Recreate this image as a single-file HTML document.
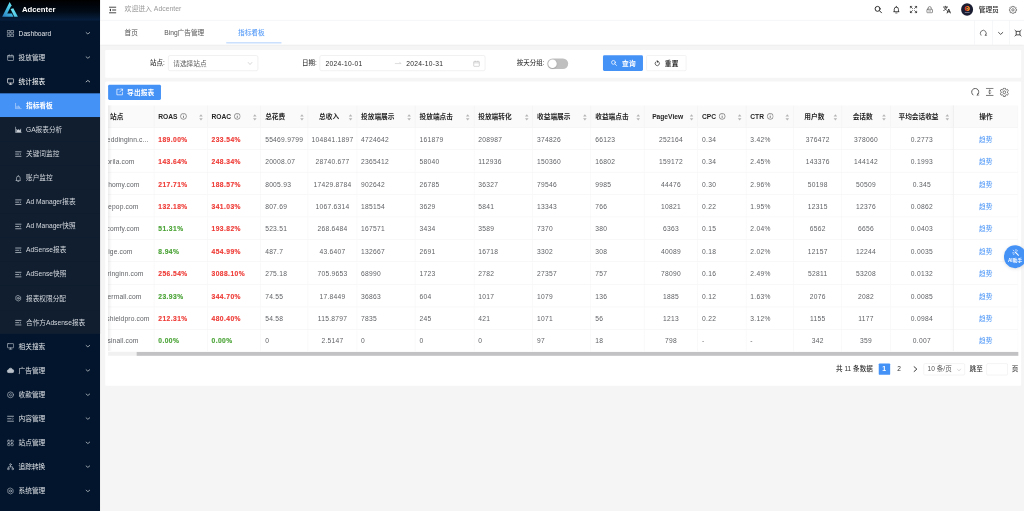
<!DOCTYPE html><html lang="zh-CN"><head><meta charset="utf-8"><title>Adcenter</title><style>
*{box-sizing:border-box;margin:0;padding:0}
html,body{width:1024px;height:511px;overflow:hidden;background:#f5f5f5}
body{font-family:"Liberation Sans","Noto Sans CJK SC",sans-serif;font-size:14px;color:#333;}
#app{position:absolute;left:0;top:0;width:2150px;height:1073px;transform:scale(0.476279);transform-origin:0 0;background:#f5f5f5;overflow:hidden;filter:opacity(.9999)}
.abs{position:absolute}
.side{position:absolute;left:0;top:0;width:210px;height:1073px;background:#03152c;box-shadow:1px 0 3px rgba(0,21,41,.28);z-index:5}
.logo{position:absolute;left:0;top:0;width:210px;height:43px;background:linear-gradient(180deg,#000 0%,#010a16 55%,#06203f 100%)}
.logo b{position:absolute;left:46px;top:0;line-height:41px;font-size:16.3px;color:#fff;font-weight:700}
.mi{position:absolute;left:0;width:210px;height:50.6px;line-height:50.6px;color:#dfe3e8;font-size:14px;white-space:nowrap}
.mi .t{position:absolute;left:39px;top:.8px}
.mi svg.ic{position:absolute;left:14px;top:18px;width:16.4px;height:16.4px;color:#b9c0c9}
.mi svg.ch{position:absolute;left:178.6px;top:20px;width:11px;height:11px}
.tsel{color:#fff}.tsel svg.ic{color:#fff}.sub{background:#101e30}
.sub .t{left:54.5px;color:#d5d9de}
.sub svg.ic{left:30.5px;top:19px;width:15px;height:15px;color:#ccd2d9}
.act{background:#4592f7}
.act .t{color:#fff;font-weight:700}.act svg.ic{color:#dbe9fd}
.hdr{position:absolute;left:210px;top:0;width:1940px;height:43px;background:#fff;border-bottom:1px solid #eef0f2}
.tabs{position:absolute;left:210px;top:43px;width:1940px;height:50.5px;background:#fff;box-shadow:0 1px 4px rgba(0,21,41,.08)}
.tab{position:absolute;top:-1px;line-height:53px;font-size:14px;color:#555;white-space:nowrap}
.card{position:absolute;background:#fff;border-radius:2px}
.lbl{position:absolute;line-height:32px;font-size:13.6px;color:#3a3a3a;font-weight:500;white-space:nowrap}
.inp{position:absolute;height:32.5px;border:1px solid #e2e2e4;border-radius:4px;background:#fff}
.btn{position:absolute;height:32.5px;border-radius:3px;line-height:32px;font-size:14px;white-space:nowrap}
.th{position:absolute;top:0;height:47px;line-height:47px;font-weight:700;color:#262626;font-size:14px;white-space:nowrap;border-bottom:1px solid #f0f0f0}
.th:after{content:"";position:absolute;right:0;top:0;height:47px;width:1px;background:#f0f0f0}
.td{position:absolute;height:47px;line-height:46px;color:#606266;font-size:14px;letter-spacing:.6px;white-space:nowrap;border-bottom:1px solid #f0f0f0;border-right:1px solid #f3f3f3;overflow:hidden}
.red{color:#ee3b36;font-weight:700;letter-spacing:.9px;-webkit-text-stroke:.3px #ee3b36}
.grn{color:#4aa336;font-weight:700;letter-spacing:.9px;-webkit-text-stroke:.3px #4aa336}
.lnk{color:#4a95f7;letter-spacing:0}
.pg{position:absolute;line-height:24px;font-size:13.8px;color:#333;font-weight:500;white-space:nowrap}
</style></head><body><div id="app">
<div class="side">
<div class="logo">
<svg class="abs" style="left:0;top:0;width:42px;height:42px" viewBox="0 0 42 42"><defs><linearGradient id="lg1" x1="0.1" y1="1" x2="0.7" y2="0"><stop offset="0" stop-color="#2a7fc2"/><stop offset="0.55" stop-color="#45bfe2"/><stop offset="1" stop-color="#66e6f4"/></linearGradient><linearGradient id="lg2" x1="0" y1="0" x2="1" y2="1"><stop offset="0" stop-color="#74e8f5"/><stop offset="1" stop-color="#49c4e6"/></linearGradient></defs><path d="M20.2 4L4.6 35.4H28.2L24.8 28.4H15.2L22.8 13.6L24.8 12.2z" fill="url(#lg1)"/><path d="M22.2 18.8L28 17.4L37.6 35.4H30.2z" fill="url(#lg2)"/></svg>
<b>Adcenter</b></div>
<div class="abs" style="left:0;top:195.8px;width:210px;height:505.5px;background:#101e30"></div>
<div class="mi" style="top:44.2px"><svg class="ic" viewBox="0 0 16.4 16.4" style="" fill="none" stroke="currentColor" stroke-width="1.35" stroke-linecap="round" stroke-linejoin="round"><rect x="2" y="2" width="5" height="5"/><rect x="9.5" y="2" width="5" height="5"/><rect x="2" y="9.5" width="5" height="5"/><rect x="9.5" y="9.5" width="5" height="5"/></svg><span class="t">Dashboard</span><svg class="ch" viewBox="0 0 12 12" style="" fill="none" stroke="currentColor" stroke-width="1.5" stroke-linecap="round" stroke-linejoin="round"><path d="M1.8 4.6L6 8l4.2-3.4"/></svg></div>
<div class="mi" style="top:94.8px"><svg class="ic" viewBox="0 0 16.4 16.4" style="" fill="none" stroke="currentColor" stroke-width="1.35" stroke-linecap="round" stroke-linejoin="round"><rect x="2" y="3.5" width="12.5" height="10.5" rx="1"/><path d="M2 6.5h12.5M5.5 2v2M11 2v2"/></svg><span class="t">投放管理</span><svg class="ch" viewBox="0 0 12 12" style="" fill="none" stroke="currentColor" stroke-width="1.5" stroke-linecap="round" stroke-linejoin="round"><path d="M1.8 4.6L6 8l4.2-3.4"/></svg></div>
<div class="mi tsel" style="top:145.3px"><svg class="ic" viewBox="0 0 16.4 16.4" style="" fill="none" stroke="currentColor" stroke-width="1.35" stroke-linecap="round" stroke-linejoin="round"><rect x="1.8" y="2.5" width="12.8" height="8.8" rx="1"/><path d="M5.5 14h5.4M8.2 11.5V14"/></svg><span class="t">统计报表</span><svg class="ch" viewBox="0 0 12 12" style="" fill="none" stroke="currentColor" stroke-width="1.5" stroke-linecap="round" stroke-linejoin="round"><path d="M1.8 7.6L6 4.2l4.2 3.4"/></svg></div>
<div class="mi sub act" style="top:195.8px"><svg class="ic" viewBox="0 0 16.4 16.4" style="" fill="none" stroke="currentColor" stroke-width="1.35" stroke-linecap="round" stroke-linejoin="round"><path d="M1.8 2v12.4h13" stroke-width="1.2"/><path d="M5 12.6V9M8 12.6V7.4M11 12.6V9.6" stroke-width="1.6" stroke-linecap="butt"/></svg><span class="t">指标看板</span></div>
<div class="mi sub" style="top:246.4px"><svg class="ic" viewBox="0 0 16.4 16.4" style="" fill="none" stroke="currentColor" stroke-width="1.35" stroke-linecap="round" stroke-linejoin="round"><path d="M1.8 2v12.4h13"/><path d="M4 13V6.4l2.6 2.8 2.4-2 2.4 2.4L14 5.6V13z" fill="currentColor" stroke-width=".6"/></svg><span class="t">GA报表分析</span></div>
<div class="mi sub" style="top:296.9px"><svg class="ic" viewBox="0 0 16.4 16.4" style="" fill="none" stroke="currentColor" stroke-width="1.35" stroke-linecap="round" stroke-linejoin="round"><path d="M2 3h12.4M2 8.2h7.4M2 13.4h12.4" stroke-width="1.7"/><path d="M12.4 6.8l1.8 1.4-1.8 1.4" stroke-width="1.1"/></svg><span class="t">关键词监控</span></div>
<div class="mi sub" style="top:347.5px"><svg class="ic" viewBox="0 0 16.4 16.4" style="" fill="none" stroke="currentColor" stroke-width="1.35" stroke-linecap="round" stroke-linejoin="round"><path d="M4 12.4V7.4a4.2 4.2 0 0 1 8.4 0v5l.8.6H3.2zM7 15.4h2.4M8.2 1.6v1.4"/></svg><span class="t">账户监控</span></div>
<div class="mi sub" style="top:398.0px"><svg class="ic" viewBox="0 0 16.4 16.4" style="" fill="none" stroke="currentColor" stroke-width="1.35" stroke-linecap="round" stroke-linejoin="round"><path d="M2 3h12.4M2 8.2h7.4M2 13.4h12.4" stroke-width="1.7"/><path d="M12.4 6.8l1.8 1.4-1.8 1.4" stroke-width="1.1"/></svg><span class="t">Ad Manager报表</span></div>
<div class="mi sub" style="top:448.6px"><svg class="ic" viewBox="0 0 16.4 16.4" style="" fill="none" stroke="currentColor" stroke-width="1.35" stroke-linecap="round" stroke-linejoin="round"><path d="M2 3h12.4M2 8.2h7.4M2 13.4h12.4" stroke-width="1.7"/><path d="M12.4 6.8l1.8 1.4-1.8 1.4" stroke-width="1.1"/></svg><span class="t">Ad Manager快照</span></div>
<div class="mi sub" style="top:499.1px"><svg class="ic" viewBox="0 0 16.4 16.4" style="" fill="none" stroke="currentColor" stroke-width="1.35" stroke-linecap="round" stroke-linejoin="round"><path d="M2 3h12.4M2 8.2h7.4M2 13.4h12.4" stroke-width="1.7"/><path d="M12.4 6.8l1.8 1.4-1.8 1.4" stroke-width="1.1"/></svg><span class="t">AdSense报表</span></div>
<div class="mi sub" style="top:549.7px"><svg class="ic" viewBox="0 0 16.4 16.4" style="" fill="none" stroke="currentColor" stroke-width="1.35" stroke-linecap="round" stroke-linejoin="round"><path d="M2 3h12.4M2 8.2h7.4M2 13.4h12.4" stroke-width="1.7"/><path d="M12.4 6.8l1.8 1.4-1.8 1.4" stroke-width="1.1"/></svg><span class="t">AdSense快照</span></div>
<div class="mi sub" style="top:600.2px"><svg class="ic" viewBox="0 0 16.4 16.4" style="" fill="none" stroke="currentColor" stroke-width="1.35" stroke-linecap="round" stroke-linejoin="round"><path d="M8 1.6l5.5 3.2v6.4L8 14.4l-5.5-3.2V4.8z"/><circle cx="8" cy="8" r="2.2"/></svg><span class="t">报表权限分配</span></div>
<div class="mi sub" style="top:650.8px"><svg class="ic" viewBox="0 0 16.4 16.4" style="" fill="none" stroke="currentColor" stroke-width="1.35" stroke-linecap="round" stroke-linejoin="round"><path d="M2 3h12.4M2 8.2h7.4M2 13.4h12.4" stroke-width="1.7"/><path d="M12.4 6.8l1.8 1.4-1.8 1.4" stroke-width="1.1"/></svg><span class="t">合作方Adsense报表</span></div>
<div class="mi" style="top:701.4px"><svg class="ic" viewBox="0 0 16.4 16.4" style="" fill="none" stroke="currentColor" stroke-width="1.35" stroke-linecap="round" stroke-linejoin="round"><rect x="1.8" y="2.5" width="12.8" height="8.8" rx="1"/><path d="M5.5 14h5.4M8.2 11.5V14"/></svg><span class="t">相关搜索</span><svg class="ch" viewBox="0 0 12 12" style="" fill="none" stroke="currentColor" stroke-width="1.5" stroke-linecap="round" stroke-linejoin="round"><path d="M1.8 4.6L6 8l4.2-3.4"/></svg></div>
<div class="mi" style="top:751.9px"><svg class="ic" viewBox="0 0 16.4 16.4" style="" fill="none" stroke="currentColor" stroke-width="1.35" stroke-linecap="round" stroke-linejoin="round"><path d="M4.2 12.5a3 3 0 0 1-.3-6 4.3 4.3 0 0 1 8.3-.6 3.3 3.3 0 0 1-.4 6.6z" fill="currentColor"/></svg><span class="t">广告管理</span><svg class="ch" viewBox="0 0 12 12" style="" fill="none" stroke="currentColor" stroke-width="1.5" stroke-linecap="round" stroke-linejoin="round"><path d="M1.8 4.6L6 8l4.2-3.4"/></svg></div>
<div class="mi" style="top:802.5px"><svg class="ic" viewBox="0 0 16.4 16.4" style="" fill="none" stroke="currentColor" stroke-width="1.35" stroke-linecap="round" stroke-linejoin="round"><circle cx="8" cy="8" r="6.2"/><path d="M10 6.3a2.4 2.4 0 1 0 0 3.4"/></svg><span class="t">收款管理</span><svg class="ch" viewBox="0 0 12 12" style="" fill="none" stroke="currentColor" stroke-width="1.5" stroke-linecap="round" stroke-linejoin="round"><path d="M1.8 4.6L6 8l4.2-3.4"/></svg></div>
<div class="mi" style="top:853.0px"><svg class="ic" viewBox="0 0 16.4 16.4" style="" fill="none" stroke="currentColor" stroke-width="1.35" stroke-linecap="round" stroke-linejoin="round"><path d="M2 3h12.4M2 8.2h7.4M2 13.4h12.4" stroke-width="1.7"/><path d="M12.4 6.8l1.8 1.4-1.8 1.4" stroke-width="1.1"/></svg><span class="t">内容管理</span><svg class="ch" viewBox="0 0 12 12" style="" fill="none" stroke="currentColor" stroke-width="1.5" stroke-linecap="round" stroke-linejoin="round"><path d="M1.8 4.6L6 8l4.2-3.4"/></svg></div>
<div class="mi" style="top:903.5px"><svg class="ic" viewBox="0 0 16.4 16.4" style="" fill="none" stroke="currentColor" stroke-width="1.35" stroke-linecap="round" stroke-linejoin="round"><rect x="2.2" y="2.2" width="4.6" height="4.6" rx="1"/><rect x="9.2" y="2.2" width="4.6" height="4.6" rx="1"/><rect x="2.2" y="9.2" width="4.6" height="4.6" rx="1"/><rect x="9.2" y="9.2" width="4.6" height="4.6" rx="1"/></svg><span class="t">站点管理</span><svg class="ch" viewBox="0 0 12 12" style="" fill="none" stroke="currentColor" stroke-width="1.5" stroke-linecap="round" stroke-linejoin="round"><path d="M1.8 4.6L6 8l4.2-3.4"/></svg></div>
<div class="mi" style="top:954.1px"><svg class="ic" viewBox="0 0 16.4 16.4" style="" fill="none" stroke="currentColor" stroke-width="1.35" stroke-linecap="round" stroke-linejoin="round"><circle cx="8" cy="3.3" r="1.8"/><circle cx="3.4" cy="12.6" r="1.8"/><circle cx="12.6" cy="12.6" r="1.8"/><path d="M8 5.2v3M3.4 10.8V8.2h9.2v2.6"/></svg><span class="t">追踪转换</span><svg class="ch" viewBox="0 0 12 12" style="" fill="none" stroke="currentColor" stroke-width="1.5" stroke-linecap="round" stroke-linejoin="round"><path d="M1.8 4.6L6 8l4.2-3.4"/></svg></div>
<div class="mi" style="top:1004.6px"><svg class="ic" viewBox="0 0 16.4 16.4" style="" fill="none" stroke="currentColor" stroke-width="1.35" stroke-linecap="round" stroke-linejoin="round"><path d="M8 1.6l5.5 3.2v6.4L8 14.4l-5.5-3.2V4.8z"/><circle cx="8" cy="8" r="2.2"/></svg><span class="t">系统管理</span><svg class="ch" viewBox="0 0 12 12" style="" fill="none" stroke="currentColor" stroke-width="1.5" stroke-linecap="round" stroke-linejoin="round"><path d="M1.8 4.6L6 8l4.2-3.4"/></svg></div>
<div class="mi" style="top:1055.2px"><svg class="ic" viewBox="0 0 16.4 16.4" style="" fill="none" stroke="currentColor" stroke-width="1.35" stroke-linecap="round" stroke-linejoin="round"><path d="M2 3h12.4M2 8.2h7.4M2 13.4h12.4" stroke-width="1.7"/><path d="M12.4 6.8l1.8 1.4-1.8 1.4" stroke-width="1.1"/></svg><span class="t">日志管理</span><svg class="ch" viewBox="0 0 12 12" style="" fill="none" stroke="currentColor" stroke-width="1.5" stroke-linecap="round" stroke-linejoin="round"><path d="M1.8 4.6L6 8l4.2-3.4"/></svg></div>
</div>
<div class="hdr">
<svg class="abs" style="left:18px;top:12.5px;width:17px;height:16px;color:#222" viewBox="0 0 17 16" fill="none" stroke="currentColor" stroke-width="1.9"><path d="M1 2h15M7.5 8h8.5M1 14h15"/><path d="M5 5L1.6 8 5 11z" fill="currentColor" stroke="none"/></svg>
<span class="abs" style="left:51.5px;top:-1px;line-height:40px;font-size:14.4px;color:#9a9a9a;white-space:nowrap">欢迎进入 Adcenter</span>
<svg class="abs" style="left:1625.3px;top:11px;width:18px;height:18px;color:#262626" viewBox="0 0 18 18" fill="none" stroke="currentColor" stroke-width="2.0" stroke-linecap="round" stroke-linejoin="round"><circle cx="7.6" cy="7.6" r="5.2"/><path d="M11.6 11.6L16 16"/></svg>
<svg class="abs" style="left:1662.9px;top:11px;width:18px;height:18px;color:#262626" viewBox="0 0 18 18" fill="none" stroke="currentColor" stroke-width="1.7" stroke-linecap="round" stroke-linejoin="round"><path d="M4.6 13.4V8.4a4.4 4.4 0 0 1 8.8 0v5M3.6 13.6h10.8M7.6 16.4h2.8M9 2.2v1.6"/></svg>
<svg class="abs" style="left:1699.2px;top:11px;width:18px;height:18px;color:#262626" viewBox="0 0 18 18" fill="none" stroke="currentColor" stroke-width="1.5" stroke-linecap="round" stroke-linejoin="round"><path d="M2.4 2.4l4.4 4.4M2.4 5.4v-3h3M15.6 2.4l-4.4 4.4M12.6 2.4h3v3M2.4 15.6l4.4-4.4M2.4 12.6v3h3M15.6 15.6l-4.4-4.4M15.6 12.6v3h-3"/></svg>
<svg class="abs" style="left:1733.4px;top:11px;width:18px;height:18px;color:#666" viewBox="0 0 18 18" fill="none" stroke="currentColor" stroke-width="1.5" stroke-linecap="round" stroke-linejoin="round"><rect x="3.2" y="8.4" width="11.6" height="7.4" rx="1.2"/><path d="M5.8 8.2V6a3.2 3.2 0 0 1 6.4 0v2.2M7 12h4"/></svg>
<svg class="abs" style="left:1768.5px;top:11px;width:18px;height:18px;color:#262626" viewBox="0 0 18 18" fill="none" stroke="currentColor" stroke-width="1.6" stroke-linecap="round" stroke-linejoin="round"><path d="M1.8 3.8h8.6M6 2v1.8M9 4c-.9 3.4-3.2 5.8-6.6 7M4 6.2c.9 2 2.8 3.6 5.2 4.4"/><path d="M9.6 16.4L13 8l3.4 8.4M10.8 13.8h4.4" stroke-width="1.9"/></svg>
<div class="abs" style="left:1807.6px;top:7px;width:25.5px;height:25.5px;border-radius:50%;background:#1b1d33;overflow:hidden"><svg viewBox="0 0 25 25" width="25.5" height="25.5"><circle cx="12.5" cy="10.6" r="4" fill="none" stroke="#e23a2a" stroke-width="2.3"/><path d="M12.5 6.6a4 4 0 0 1 0 8" fill="none" stroke="#f29a26" stroke-width="2.3"/><path d="M11 8.6l4 2-4 2z" fill="#f6c12e"/><rect x="7.5" y="18.2" width="10" height="1.5" fill="#8d8fa6"/></svg></div>
<span class="abs" style="left:1845.0px;top:0;line-height:40px;font-size:14px;color:#222;font-weight:500;white-space:nowrap">管理员</span>
<svg class="abs" style="left:1908.3px;top:11.5px;width:17.5px;height:17.5px;color:#505050" viewBox="0 0 19 19" fill="none" stroke="currentColor" stroke-width="1.6" stroke-linejoin="round"><path d="M7.61 3.18L7.82 1.07L11.18 1.07L11.39 3.18L12.63 3.69L14.28 2.35L16.65 4.72L15.31 6.37L15.82 7.61L17.93 7.82L17.93 11.18L15.82 11.39L15.31 12.63L16.65 14.28L14.28 16.65L12.63 15.31L11.39 15.82L11.18 17.93L7.82 17.93L7.61 15.82L6.37 15.31L4.72 16.65L2.35 14.28L3.69 12.63L3.18 11.39L1.07 11.18L1.07 7.82L3.18 7.61L3.69 6.37L2.35 4.72L4.72 2.35L6.37 3.69z"/><circle cx="9.5" cy="9.5" r="2.7"/></svg>
</div>
<div class="tabs">
<span class="tab" style="left:51.4px">首页</span>
<span class="tab" style="left:134.9px">Bing广告管理</span>
<span class="tab" style="left:289.7px;color:#4592f7">指标看板</span>
<div class="abs" style="left:265.0px;top:45.5px;width:115.5px;height:2px;background:#a9ccfb"></div>
<div class="abs" style="left:1835.9px;top:0;width:1px;height:50.5px;background:#eceef0"></div>
<div class="abs" style="left:1872.6px;top:0;width:1px;height:50.5px;background:#eceef0"></div>
<div class="abs" style="left:1909.3px;top:0;width:1px;height:50.5px;background:#eceef0"></div>
<svg class="abs" style="left:1846.0px;top:17.5px;width:17px;height:17px;color:#555" viewBox="0 0 17 17" fill="none" stroke="currentColor" stroke-width="1.7" stroke-linecap="round"><path d="M3.6 13A6.3 6.3 0 1 1 13 13.4"/><path d="M13.8 10.4l-.6 3.2 2.8-.4" stroke-width="1.3"/></svg>
<svg class="abs" style="left:1883.9px;top:19.5px;width:14px;height:14px;color:#444" viewBox="0 0 14 14" fill="none" stroke="currentColor" stroke-width="1.9" stroke-linecap="round" stroke-linejoin="round"><path d="M2.6 5.2L7 9.2l4.4-4"/></svg>
<svg class="abs" style="left:1919.3px;top:17.5px;width:17px;height:17px;color:#4a4a4a" viewBox="0 0 17 17" fill="none" stroke="currentColor" stroke-width="2" stroke-linecap="round"><rect x="4.6" y="4.8" width="7.8" height="7.4"/><path d="M2 2.4l2.2 2M15 2.4l-2.2 2M2 14.6l2.2-2M15 14.6l-2.2-2" stroke-width="1.8"/></svg>
</div>
<div class="card" style="left:221.3px;top:105.0px;width:1922.4px;height:58.1px">
<span class="lbl" style="left:93.6px;top:12.4px">站点:</span>
<div class="inp" style="left:131.4px;top:11.1px;width:189.5px"><span class="abs" style="left:10px;top:1.3px;line-height:30px;color:#5c5c5c;font-size:14px;white-space:nowrap">请选择站点</span><svg class="abs" style="right:10px;top:10px;width:12px;height:12px;color:#c0c0c0" viewBox="0 0 12 12" fill="none" stroke="currentColor" stroke-width="1.3"><path d="M1.5 3.5L6 8.5l4.5-5"/></svg></div>
<span class="lbl" style="left:412.8px;top:12.4px">日期:</span>
<div class="inp" style="left:449.5px;top:11.1px;width:348.5px">
<span class="abs" style="left:11.6px;top:1.3px;line-height:30px;color:#2c2c2c;font-size:14px;letter-spacing:.6px;white-space:nowrap">2024-10-01</span>
<svg class="abs" style="left:155.8px;top:10px;width:16px;height:12px;color:#c4c4c4" viewBox="0 0 16 12" fill="none" stroke="currentColor" stroke-width="1.2"><path d="M1 6.5h13M10.5 3l3.5 3.5"/></svg>
<span class="abs" style="left:181.1px;top:1.3px;line-height:30px;color:#2c2c2c;font-size:14px;letter-spacing:.6px;white-space:nowrap">2024-10-31</span>
<svg class="abs" style="left:321.6px;top:8.5px;width:15px;height:15px;color:#bdbdbd" viewBox="0 0 14 14" fill="none" stroke="currentColor" stroke-width="1.2"><rect x="1.5" y="2.8" width="11" height="9.6" rx="1"/><path d="M1.5 5.6h11M4.5 1.4v2.4M9.5 1.4v2.4"/></svg>
</div>
<span class="lbl" style="left:863.7px;top:12.4px">按天分组:</span>
<div class="abs" style="left:928.2px;top:17.8px;width:43.5px;height:22px;border-radius:11px;background:#bfbfbf"><div class="abs" style="left:2px;top:2px;width:18px;height:18px;border-radius:50%;background:#fff;box-shadow:0 1px 3px rgba(0,0,0,.25)"></div></div>
<div class="btn" style="left:1044.8px;top:11.1px;width:84.0px;background:#4592f7;color:#fff"><svg class="abs" style="left:16px;top:9px;width:14px;height:14px" viewBox="0 0 14 14" fill="none" stroke="#fff" stroke-width="1.5" stroke-linecap="round"><circle cx="6" cy="6" r="4"/><path d="M9.2 9.2L12.6 12.6"/></svg><span class="abs" style="left:39.9px;top:1px;font-weight:700;letter-spacing:.5px">查询</span></div>
<div class="btn" style="left:1136.1px;top:11.1px;width:83.5px;background:#fff;border:1px solid #e6e6e8;color:#222"><svg class="abs" style="left:15px;top:8.5px;width:14px;height:14px" viewBox="0 0 14 14" fill="none" stroke="#333" stroke-width="1.5" stroke-linecap="round"><path d="M9.6 3.4A4.6 4.6 0 1 1 4.4 3.4"/><path d="M6.2 1l3.2 2.2-2.6 2" stroke-width="1.2" fill="#333"/></svg><span class="abs" style="left:37.4px;top:0;font-weight:700;letter-spacing:.5px">重置</span></div>
</div>
<div class="card" style="left:221.3px;top:170.9px;width:1922.4px;height:638.9px">
<div class="btn" style="left:5.9px;top:6.7px;width:110.4px;background:#4592f7;color:#fff"><svg class="abs" style="left:16px;top:7.5px;width:16.5px;height:16.5px" viewBox="0 0 15 15" fill="none" stroke="#fff" stroke-width="1.3" stroke-linecap="round" stroke-linejoin="round"><path d="M12.8 8.4v4.4H2.2V2.2h4.4"/><path d="M7.4 7.6L13 2M9.4 1.8H13v3.6"/></svg><span class="abs" style="left:39.5px;top:0;font-weight:700;letter-spacing:.4px">导出报表</span></div>
<svg class="abs" style="left:1817.2px;top:13.2px;width:19px;height:19px;color:#505050" viewBox="0 0 19 19" fill="none" stroke="currentColor" stroke-width="1.9" stroke-linecap="round"><path d="M5 15.4A7.6 7.6 0 1 1 13.6 15.8"/><path d="M15 12.2l-1.2 3.8 3.6-.4" stroke-width="1.2"/></svg>
<svg class="abs" style="left:1847.9px;top:13.5px;width:18px;height:18px;color:#444" viewBox="0 0 18 18" fill="none" stroke="currentColor" stroke-width="1.7" stroke-linecap="round"><path d="M2 1.6h14M2 16.4h14" stroke-width="1.5"/><path d="M9 5v8M7.2 6.8L9 5l1.8 1.8M7.2 11.2L9 13l1.8-1.8" stroke-width="1.4"/></svg>
<svg class="abs" style="left:1877.5px;top:13.2px;width:19.5px;height:19.5px;color:#555" viewBox="0 0 19 19" fill="none" stroke="currentColor" stroke-width="1.6" stroke-linejoin="round"><path d="M7.30 3.38L7.58 0.91L11.42 0.91L11.70 3.38L13.70 4.54L15.98 3.54L17.90 6.87L15.90 8.35L15.90 10.65L17.90 12.13L15.98 15.46L13.70 14.46L11.70 15.62L11.42 18.09L7.58 18.09L7.30 15.62L5.30 14.46L3.02 15.46L1.10 12.13L3.10 10.65L3.10 8.35L1.10 6.87L3.02 3.54L5.30 4.54z"/><ellipse cx="9.5" cy="9.5" rx="2.6" ry="3"/></svg>
<div class="abs" style="left:5.7px;top:50.4px;width:1910.9px;height:517.0px;overflow:hidden">
<div class="abs" style="left:0;top:0;width:1910.9px;height:47px;background:#fafafa"></div>
<div class="th" style="left:-63.0px;width:159.9px"><span class="abs" style="left:67.0px;top:.5px">站点</span></div>
<div class="th" style="left:96.9px;width:111.8px"><span class="abs" style="left:8.5px;top:.5px">ROAS<svg style="display:inline-block;vertical-align:-2px;margin-left:5.5px;width:14.5px;height:14.5px" viewBox="0 0 14 14" fill="none" stroke="#444" stroke-width="1.1"><circle cx="7" cy="7" r="6"/><path d="M7 6.2v4M7 3.6v1.2" stroke-width="1.3"/></svg></span><svg class="abs" style="right:8.5px;top:17.5px;width:10px;height:15px" viewBox="0 0 9 14"><path d="M4.5 1L8 5.4H1z" fill="#b4b4b4"/><path d="M4.5 13L8 8.6H1z" fill="#b4b4b4"/></svg></div>
<div class="th" style="left:208.7px;width:112.5px"><span class="abs" style="left:8.5px;top:.5px">ROAC<svg style="display:inline-block;vertical-align:-2px;margin-left:5.5px;width:14.5px;height:14.5px" viewBox="0 0 14 14" fill="none" stroke="#444" stroke-width="1.1"><circle cx="7" cy="7" r="6"/><path d="M7 6.2v4M7 3.6v1.2" stroke-width="1.3"/></svg></span><svg class="abs" style="right:8.5px;top:17.5px;width:10px;height:15px" viewBox="0 0 9 14"><path d="M4.5 1L8 5.4H1z" fill="#b4b4b4"/><path d="M4.5 13L8 8.6H1z" fill="#b4b4b4"/></svg></div>
<div class="th" style="left:321.2px;width:99.3px"><span class="abs" style="left:8.5px;top:.5px">总花费</span><svg class="abs" style="right:8.5px;top:17.5px;width:10px;height:15px" viewBox="0 0 9 14"><path d="M4.5 1L8 5.4H1z" fill="#b4b4b4"/><path d="M4.5 13L8 8.6H1z" fill="#b4b4b4"/></svg></div>
<div class="th" style="left:420.5px;width:102.1px"><span class="abs" style="left:8px;top:.5px;width:71.1px;text-align:center">总收入</span><svg class="abs" style="right:8.5px;top:17.5px;width:10px;height:15px" viewBox="0 0 9 14"><path d="M4.5 1L8 5.4H1z" fill="#b4b4b4"/><path d="M4.5 13L8 8.6H1z" fill="#b4b4b4"/></svg></div>
<div class="th" style="left:522.6px;width:122.8px"><span class="abs" style="left:8.5px;top:.5px">投放端展示</span><svg class="abs" style="right:8.5px;top:17.5px;width:10px;height:15px" viewBox="0 0 9 14"><path d="M4.5 1L8 5.4H1z" fill="#b4b4b4"/><path d="M4.5 13L8 8.6H1z" fill="#b4b4b4"/></svg></div>
<div class="th" style="left:645.4px;width:123.3px"><span class="abs" style="left:8.5px;top:.5px">投放端点击</span><svg class="abs" style="right:8.5px;top:17.5px;width:10px;height:15px" viewBox="0 0 9 14"><path d="M4.5 1L8 5.4H1z" fill="#b4b4b4"/><path d="M4.5 13L8 8.6H1z" fill="#b4b4b4"/></svg></div>
<div class="th" style="left:768.7px;width:123.4px"><span class="abs" style="left:8.5px;top:.5px">投放端转化</span><svg class="abs" style="right:8.5px;top:17.5px;width:10px;height:15px" viewBox="0 0 9 14"><path d="M4.5 1L8 5.4H1z" fill="#b4b4b4"/><path d="M4.5 13L8 8.6H1z" fill="#b4b4b4"/></svg></div>
<div class="th" style="left:892.1px;width:122.3px"><span class="abs" style="left:8.5px;top:.5px">收益端展示</span><svg class="abs" style="right:8.5px;top:17.5px;width:10px;height:15px" viewBox="0 0 9 14"><path d="M4.5 1L8 5.4H1z" fill="#b4b4b4"/><path d="M4.5 13L8 8.6H1z" fill="#b4b4b4"/></svg></div>
<div class="th" style="left:1014.4px;width:111.8px"><span class="abs" style="left:8.5px;top:.5px">收益端点击</span><svg class="abs" style="right:8.5px;top:17.5px;width:10px;height:15px" viewBox="0 0 9 14"><path d="M4.5 1L8 5.4H1z" fill="#b4b4b4"/><path d="M4.5 13L8 8.6H1z" fill="#b4b4b4"/></svg></div>
<div class="th" style="left:1126.2px;width:112.3px"><span class="abs" style="left:8px;top:.5px;width:81.3px;text-align:center">PageView</span><svg class="abs" style="right:8.5px;top:17.5px;width:10px;height:15px" viewBox="0 0 9 14"><path d="M4.5 1L8 5.4H1z" fill="#b4b4b4"/><path d="M4.5 13L8 8.6H1z" fill="#b4b4b4"/></svg></div>
<div class="th" style="left:1238.5px;width:101.3px"><span class="abs" style="left:8.5px;top:.5px">CPC<svg style="display:inline-block;vertical-align:-2px;margin-left:5.5px;width:14.5px;height:14.5px" viewBox="0 0 14 14" fill="none" stroke="#444" stroke-width="1.1"><circle cx="7" cy="7" r="6"/><path d="M7 6.2v4M7 3.6v1.2" stroke-width="1.3"/></svg></span><svg class="abs" style="right:8.5px;top:17.5px;width:10px;height:15px" viewBox="0 0 9 14"><path d="M4.5 1L8 5.4H1z" fill="#b4b4b4"/><path d="M4.5 13L8 8.6H1z" fill="#b4b4b4"/></svg></div>
<div class="th" style="left:1339.8px;width:99.8px"><span class="abs" style="left:8.5px;top:.5px">CTR<svg style="display:inline-block;vertical-align:-2px;margin-left:5.5px;width:14.5px;height:14.5px" viewBox="0 0 14 14" fill="none" stroke="#444" stroke-width="1.1"><circle cx="7" cy="7" r="6"/><path d="M7 6.2v4M7 3.6v1.2" stroke-width="1.3"/></svg></span><svg class="abs" style="right:8.5px;top:17.5px;width:10px;height:15px" viewBox="0 0 9 14"><path d="M4.5 1L8 5.4H1z" fill="#b4b4b4"/><path d="M4.5 13L8 8.6H1z" fill="#b4b4b4"/></svg></div>
<div class="th" style="left:1439.6px;width:101.3px"><span class="abs" style="left:8px;top:.5px;width:70.3px;text-align:center">用户数</span><svg class="abs" style="right:8.5px;top:17.5px;width:10px;height:15px" viewBox="0 0 9 14"><path d="M4.5 1L8 5.4H1z" fill="#b4b4b4"/><path d="M4.5 13L8 8.6H1z" fill="#b4b4b4"/></svg></div>
<div class="th" style="left:1540.9px;width:101.8px"><span class="abs" style="left:8px;top:.5px;width:70.8px;text-align:center">会话数</span><svg class="abs" style="right:8.5px;top:17.5px;width:10px;height:15px" viewBox="0 0 9 14"><path d="M4.5 1L8 5.4H1z" fill="#b4b4b4"/><path d="M4.5 13L8 8.6H1z" fill="#b4b4b4"/></svg></div>
<div class="th" style="left:1642.7px;width:132.8px"><span class="abs" style="left:8px;top:.5px;width:101.8px;text-align:center">平均会话收益</span><svg class="abs" style="right:8.5px;top:17.5px;width:10px;height:15px" viewBox="0 0 9 14"><path d="M4.5 1L8 5.4H1z" fill="#b4b4b4"/><path d="M4.5 13L8 8.6H1z" fill="#b4b4b4"/></svg></div>
<div class="th" style="left:1775.5px;width:135.4px"><span class="abs" style="left:8px;top:.5px;width:119.4px;text-align:center">操作</span></div>
<div class="td" style="left:-63.0px;top:47.0px;width:159.9px"><span class="abs" style="right:11.0px;top:1.5px;letter-spacing:.3px">m.beddinginn.c...</span></div>
<div class="td" style="left:96.9px;top:47.0px;width:111.8px"><span class="abs red" style="left:8.5px;top:1.5px">189.00%</span></div>
<div class="td" style="left:208.7px;top:47.0px;width:112.5px"><span class="abs red" style="left:8.5px;top:1.5px">233.54%</span></div>
<div class="td" style="left:321.2px;top:47.0px;width:99.3px"><span class="abs " style="left:8.5px;top:1.5px">55469.9799</span></div>
<div class="td" style="left:420.5px;top:47.0px;width:102.1px"><span class="abs " style="left:0;top:1.5px;width:100%;text-align:center">104841.1897</span></div>
<div class="td" style="left:522.6px;top:47.0px;width:122.8px"><span class="abs " style="left:8.5px;top:1.5px">4724642</span></div>
<div class="td" style="left:645.4px;top:47.0px;width:123.3px"><span class="abs " style="left:8.5px;top:1.5px">161879</span></div>
<div class="td" style="left:768.7px;top:47.0px;width:123.4px"><span class="abs " style="left:8.5px;top:1.5px">208987</span></div>
<div class="td" style="left:892.1px;top:47.0px;width:122.3px"><span class="abs " style="left:8.5px;top:1.5px">374826</span></div>
<div class="td" style="left:1014.4px;top:47.0px;width:111.8px"><span class="abs " style="left:8.5px;top:1.5px">66123</span></div>
<div class="td" style="left:1126.2px;top:47.0px;width:112.3px"><span class="abs " style="left:0;top:1.5px;width:100%;text-align:center">252164</span></div>
<div class="td" style="left:1238.5px;top:47.0px;width:101.3px"><span class="abs " style="left:8.5px;top:1.5px">0.34</span></div>
<div class="td" style="left:1339.8px;top:47.0px;width:99.8px"><span class="abs " style="left:8.5px;top:1.5px">3.42%</span></div>
<div class="td" style="left:1439.6px;top:47.0px;width:101.3px"><span class="abs " style="left:0;top:1.5px;width:100%;text-align:center">376472</span></div>
<div class="td" style="left:1540.9px;top:47.0px;width:101.8px"><span class="abs " style="left:0;top:1.5px;width:100%;text-align:center">378060</span></div>
<div class="td" style="left:1642.7px;top:47.0px;width:132.8px"><span class="abs " style="left:0;top:1.5px;width:100%;text-align:center">0.2773</span></div>
<div class="td" style="left:1775.5px;top:47.0px;width:135.4px"><span class="abs lnk" style="left:0;top:1.5px;width:100%;text-align:center">趋势</span></div>
<div class="td" style="left:-63.0px;top:94.0px;width:159.9px"><span class="abs" style="right:40.4px;top:1.5px;letter-spacing:.3px">www.florila.com</span></div>
<div class="td" style="left:96.9px;top:94.0px;width:111.8px"><span class="abs red" style="left:8.5px;top:1.5px">143.64%</span></div>
<div class="td" style="left:208.7px;top:94.0px;width:112.5px"><span class="abs red" style="left:8.5px;top:1.5px">248.34%</span></div>
<div class="td" style="left:321.2px;top:94.0px;width:99.3px"><span class="abs " style="left:8.5px;top:1.5px">20008.07</span></div>
<div class="td" style="left:420.5px;top:94.0px;width:102.1px"><span class="abs " style="left:0;top:1.5px;width:100%;text-align:center">28740.677</span></div>
<div class="td" style="left:522.6px;top:94.0px;width:122.8px"><span class="abs " style="left:8.5px;top:1.5px">2365412</span></div>
<div class="td" style="left:645.4px;top:94.0px;width:123.3px"><span class="abs " style="left:8.5px;top:1.5px">58040</span></div>
<div class="td" style="left:768.7px;top:94.0px;width:123.4px"><span class="abs " style="left:8.5px;top:1.5px">112936</span></div>
<div class="td" style="left:892.1px;top:94.0px;width:122.3px"><span class="abs " style="left:8.5px;top:1.5px">150360</span></div>
<div class="td" style="left:1014.4px;top:94.0px;width:111.8px"><span class="abs " style="left:8.5px;top:1.5px">16802</span></div>
<div class="td" style="left:1126.2px;top:94.0px;width:112.3px"><span class="abs " style="left:0;top:1.5px;width:100%;text-align:center">159172</span></div>
<div class="td" style="left:1238.5px;top:94.0px;width:101.3px"><span class="abs " style="left:8.5px;top:1.5px">0.34</span></div>
<div class="td" style="left:1339.8px;top:94.0px;width:99.8px"><span class="abs " style="left:8.5px;top:1.5px">2.45%</span></div>
<div class="td" style="left:1439.6px;top:94.0px;width:101.3px"><span class="abs " style="left:0;top:1.5px;width:100%;text-align:center">143376</span></div>
<div class="td" style="left:1540.9px;top:94.0px;width:101.8px"><span class="abs " style="left:0;top:1.5px;width:100%;text-align:center">144142</span></div>
<div class="td" style="left:1642.7px;top:94.0px;width:132.8px"><span class="abs " style="left:0;top:1.5px;width:100%;text-align:center">0.1993</span></div>
<div class="td" style="left:1775.5px;top:94.0px;width:135.4px"><span class="abs lnk" style="left:0;top:1.5px;width:100%;text-align:center">趋势</span></div>
<div class="td" style="left:-63.0px;top:141.1px;width:159.9px"><span class="abs" style="right:29.9px;top:1.5px;letter-spacing:.3px">www.shomy.com</span></div>
<div class="td" style="left:96.9px;top:141.1px;width:111.8px"><span class="abs red" style="left:8.5px;top:1.5px">217.71%</span></div>
<div class="td" style="left:208.7px;top:141.1px;width:112.5px"><span class="abs red" style="left:8.5px;top:1.5px">188.57%</span></div>
<div class="td" style="left:321.2px;top:141.1px;width:99.3px"><span class="abs " style="left:8.5px;top:1.5px">8005.93</span></div>
<div class="td" style="left:420.5px;top:141.1px;width:102.1px"><span class="abs " style="left:0;top:1.5px;width:100%;text-align:center">17429.8784</span></div>
<div class="td" style="left:522.6px;top:141.1px;width:122.8px"><span class="abs " style="left:8.5px;top:1.5px">902642</span></div>
<div class="td" style="left:645.4px;top:141.1px;width:123.3px"><span class="abs " style="left:8.5px;top:1.5px">26785</span></div>
<div class="td" style="left:768.7px;top:141.1px;width:123.4px"><span class="abs " style="left:8.5px;top:1.5px">36327</span></div>
<div class="td" style="left:892.1px;top:141.1px;width:122.3px"><span class="abs " style="left:8.5px;top:1.5px">79546</span></div>
<div class="td" style="left:1014.4px;top:141.1px;width:111.8px"><span class="abs " style="left:8.5px;top:1.5px">9985</span></div>
<div class="td" style="left:1126.2px;top:141.1px;width:112.3px"><span class="abs " style="left:0;top:1.5px;width:100%;text-align:center">44476</span></div>
<div class="td" style="left:1238.5px;top:141.1px;width:101.3px"><span class="abs " style="left:8.5px;top:1.5px">0.30</span></div>
<div class="td" style="left:1339.8px;top:141.1px;width:99.8px"><span class="abs " style="left:8.5px;top:1.5px">2.96%</span></div>
<div class="td" style="left:1439.6px;top:141.1px;width:101.3px"><span class="abs " style="left:0;top:1.5px;width:100%;text-align:center">50198</span></div>
<div class="td" style="left:1540.9px;top:141.1px;width:101.8px"><span class="abs " style="left:0;top:1.5px;width:100%;text-align:center">50509</span></div>
<div class="td" style="left:1642.7px;top:141.1px;width:132.8px"><span class="abs " style="left:0;top:1.5px;width:100%;text-align:center">0.345</span></div>
<div class="td" style="left:1775.5px;top:141.1px;width:135.4px"><span class="abs lnk" style="left:0;top:1.5px;width:100%;text-align:center">趋势</span></div>
<div class="td" style="left:-63.0px;top:188.1px;width:159.9px"><span class="abs" style="right:32.0px;top:1.5px;letter-spacing:.3px">www.tepop.com</span></div>
<div class="td" style="left:96.9px;top:188.1px;width:111.8px"><span class="abs red" style="left:8.5px;top:1.5px">132.18%</span></div>
<div class="td" style="left:208.7px;top:188.1px;width:112.5px"><span class="abs red" style="left:8.5px;top:1.5px">341.03%</span></div>
<div class="td" style="left:321.2px;top:188.1px;width:99.3px"><span class="abs " style="left:8.5px;top:1.5px">807.69</span></div>
<div class="td" style="left:420.5px;top:188.1px;width:102.1px"><span class="abs " style="left:0;top:1.5px;width:100%;text-align:center">1067.6314</span></div>
<div class="td" style="left:522.6px;top:188.1px;width:122.8px"><span class="abs " style="left:8.5px;top:1.5px">185154</span></div>
<div class="td" style="left:645.4px;top:188.1px;width:123.3px"><span class="abs " style="left:8.5px;top:1.5px">3629</span></div>
<div class="td" style="left:768.7px;top:188.1px;width:123.4px"><span class="abs " style="left:8.5px;top:1.5px">5841</span></div>
<div class="td" style="left:892.1px;top:188.1px;width:122.3px"><span class="abs " style="left:8.5px;top:1.5px">13343</span></div>
<div class="td" style="left:1014.4px;top:188.1px;width:111.8px"><span class="abs " style="left:8.5px;top:1.5px">766</span></div>
<div class="td" style="left:1126.2px;top:188.1px;width:112.3px"><span class="abs " style="left:0;top:1.5px;width:100%;text-align:center">10821</span></div>
<div class="td" style="left:1238.5px;top:188.1px;width:101.3px"><span class="abs " style="left:8.5px;top:1.5px">0.22</span></div>
<div class="td" style="left:1339.8px;top:188.1px;width:99.8px"><span class="abs " style="left:8.5px;top:1.5px">1.95%</span></div>
<div class="td" style="left:1439.6px;top:188.1px;width:101.3px"><span class="abs " style="left:0;top:1.5px;width:100%;text-align:center">12315</span></div>
<div class="td" style="left:1540.9px;top:188.1px;width:101.8px"><span class="abs " style="left:0;top:1.5px;width:100%;text-align:center">12376</span></div>
<div class="td" style="left:1642.7px;top:188.1px;width:132.8px"><span class="abs " style="left:0;top:1.5px;width:100%;text-align:center">0.0862</span></div>
<div class="td" style="left:1775.5px;top:188.1px;width:135.4px"><span class="abs lnk" style="left:0;top:1.5px;width:100%;text-align:center">趋势</span></div>
<div class="td" style="left:-63.0px;top:235.2px;width:159.9px"><span class="abs" style="right:29.9px;top:1.5px;letter-spacing:.3px">www.comfy.com</span></div>
<div class="td" style="left:96.9px;top:235.2px;width:111.8px"><span class="abs grn" style="left:8.5px;top:1.5px">51.31%</span></div>
<div class="td" style="left:208.7px;top:235.2px;width:112.5px"><span class="abs red" style="left:8.5px;top:1.5px">193.82%</span></div>
<div class="td" style="left:321.2px;top:235.2px;width:99.3px"><span class="abs " style="left:8.5px;top:1.5px">523.51</span></div>
<div class="td" style="left:420.5px;top:235.2px;width:102.1px"><span class="abs " style="left:0;top:1.5px;width:100%;text-align:center">268.6484</span></div>
<div class="td" style="left:522.6px;top:235.2px;width:122.8px"><span class="abs " style="left:8.5px;top:1.5px">167571</span></div>
<div class="td" style="left:645.4px;top:235.2px;width:123.3px"><span class="abs " style="left:8.5px;top:1.5px">3434</span></div>
<div class="td" style="left:768.7px;top:235.2px;width:123.4px"><span class="abs " style="left:8.5px;top:1.5px">3589</span></div>
<div class="td" style="left:892.1px;top:235.2px;width:122.3px"><span class="abs " style="left:8.5px;top:1.5px">7370</span></div>
<div class="td" style="left:1014.4px;top:235.2px;width:111.8px"><span class="abs " style="left:8.5px;top:1.5px">380</span></div>
<div class="td" style="left:1126.2px;top:235.2px;width:112.3px"><span class="abs " style="left:0;top:1.5px;width:100%;text-align:center">6363</span></div>
<div class="td" style="left:1238.5px;top:235.2px;width:101.3px"><span class="abs " style="left:8.5px;top:1.5px">0.15</span></div>
<div class="td" style="left:1339.8px;top:235.2px;width:99.8px"><span class="abs " style="left:8.5px;top:1.5px">2.04%</span></div>
<div class="td" style="left:1439.6px;top:235.2px;width:101.3px"><span class="abs " style="left:0;top:1.5px;width:100%;text-align:center">6562</span></div>
<div class="td" style="left:1540.9px;top:235.2px;width:101.8px"><span class="abs " style="left:0;top:1.5px;width:100%;text-align:center">6656</span></div>
<div class="td" style="left:1642.7px;top:235.2px;width:132.8px"><span class="abs " style="left:0;top:1.5px;width:100%;text-align:center">0.0403</span></div>
<div class="td" style="left:1775.5px;top:235.2px;width:135.4px"><span class="abs lnk" style="left:0;top:1.5px;width:100%;text-align:center">趋势</span></div>
<div class="td" style="left:-63.0px;top:282.2px;width:159.9px"><span class="abs" style="right:44.6px;top:1.5px;letter-spacing:.3px">www.wige.com</span></div>
<div class="td" style="left:96.9px;top:282.2px;width:111.8px"><span class="abs grn" style="left:8.5px;top:1.5px">8.94%</span></div>
<div class="td" style="left:208.7px;top:282.2px;width:112.5px"><span class="abs red" style="left:8.5px;top:1.5px">454.99%</span></div>
<div class="td" style="left:321.2px;top:282.2px;width:99.3px"><span class="abs " style="left:8.5px;top:1.5px">487.7</span></div>
<div class="td" style="left:420.5px;top:282.2px;width:102.1px"><span class="abs " style="left:0;top:1.5px;width:100%;text-align:center">43.6407</span></div>
<div class="td" style="left:522.6px;top:282.2px;width:122.8px"><span class="abs " style="left:8.5px;top:1.5px">132667</span></div>
<div class="td" style="left:645.4px;top:282.2px;width:123.3px"><span class="abs " style="left:8.5px;top:1.5px">2691</span></div>
<div class="td" style="left:768.7px;top:282.2px;width:123.4px"><span class="abs " style="left:8.5px;top:1.5px">16718</span></div>
<div class="td" style="left:892.1px;top:282.2px;width:122.3px"><span class="abs " style="left:8.5px;top:1.5px">3302</span></div>
<div class="td" style="left:1014.4px;top:282.2px;width:111.8px"><span class="abs " style="left:8.5px;top:1.5px">308</span></div>
<div class="td" style="left:1126.2px;top:282.2px;width:112.3px"><span class="abs " style="left:0;top:1.5px;width:100%;text-align:center">40089</span></div>
<div class="td" style="left:1238.5px;top:282.2px;width:101.3px"><span class="abs " style="left:8.5px;top:1.5px">0.18</span></div>
<div class="td" style="left:1339.8px;top:282.2px;width:99.8px"><span class="abs " style="left:8.5px;top:1.5px">2.02%</span></div>
<div class="td" style="left:1439.6px;top:282.2px;width:101.3px"><span class="abs " style="left:0;top:1.5px;width:100%;text-align:center">12157</span></div>
<div class="td" style="left:1540.9px;top:282.2px;width:101.8px"><span class="abs " style="left:0;top:1.5px;width:100%;text-align:center">12244</span></div>
<div class="td" style="left:1642.7px;top:282.2px;width:132.8px"><span class="abs " style="left:0;top:1.5px;width:100%;text-align:center">0.0035</span></div>
<div class="td" style="left:1775.5px;top:282.2px;width:135.4px"><span class="abs lnk" style="left:0;top:1.5px;width:100%;text-align:center">趋势</span></div>
<div class="td" style="left:-63.0px;top:329.3px;width:159.9px"><span class="abs" style="right:21.5px;top:1.5px;letter-spacing:.3px">www.ringinn.com</span></div>
<div class="td" style="left:96.9px;top:329.3px;width:111.8px"><span class="abs red" style="left:8.5px;top:1.5px">256.54%</span></div>
<div class="td" style="left:208.7px;top:329.3px;width:112.5px"><span class="abs red" style="left:8.5px;top:1.5px">3088.10%</span></div>
<div class="td" style="left:321.2px;top:329.3px;width:99.3px"><span class="abs " style="left:8.5px;top:1.5px">275.18</span></div>
<div class="td" style="left:420.5px;top:329.3px;width:102.1px"><span class="abs " style="left:0;top:1.5px;width:100%;text-align:center">705.9653</span></div>
<div class="td" style="left:522.6px;top:329.3px;width:122.8px"><span class="abs " style="left:8.5px;top:1.5px">68990</span></div>
<div class="td" style="left:645.4px;top:329.3px;width:123.3px"><span class="abs " style="left:8.5px;top:1.5px">1723</span></div>
<div class="td" style="left:768.7px;top:329.3px;width:123.4px"><span class="abs " style="left:8.5px;top:1.5px">2782</span></div>
<div class="td" style="left:892.1px;top:329.3px;width:122.3px"><span class="abs " style="left:8.5px;top:1.5px">27357</span></div>
<div class="td" style="left:1014.4px;top:329.3px;width:111.8px"><span class="abs " style="left:8.5px;top:1.5px">757</span></div>
<div class="td" style="left:1126.2px;top:329.3px;width:112.3px"><span class="abs " style="left:0;top:1.5px;width:100%;text-align:center">78090</span></div>
<div class="td" style="left:1238.5px;top:329.3px;width:101.3px"><span class="abs " style="left:8.5px;top:1.5px">0.16</span></div>
<div class="td" style="left:1339.8px;top:329.3px;width:99.8px"><span class="abs " style="left:8.5px;top:1.5px">2.49%</span></div>
<div class="td" style="left:1439.6px;top:329.3px;width:101.3px"><span class="abs " style="left:0;top:1.5px;width:100%;text-align:center">52811</span></div>
<div class="td" style="left:1540.9px;top:329.3px;width:101.8px"><span class="abs " style="left:0;top:1.5px;width:100%;text-align:center">53208</span></div>
<div class="td" style="left:1642.7px;top:329.3px;width:132.8px"><span class="abs " style="left:0;top:1.5px;width:100%;text-align:center">0.0132</span></div>
<div class="td" style="left:1775.5px;top:329.3px;width:135.4px"><span class="abs lnk" style="left:0;top:1.5px;width:100%;text-align:center">趋势</span></div>
<div class="td" style="left:-63.0px;top:376.3px;width:159.9px"><span class="abs" style="right:25.7px;top:1.5px;letter-spacing:.3px">www.ermall.com</span></div>
<div class="td" style="left:96.9px;top:376.3px;width:111.8px"><span class="abs grn" style="left:8.5px;top:1.5px">23.93%</span></div>
<div class="td" style="left:208.7px;top:376.3px;width:112.5px"><span class="abs red" style="left:8.5px;top:1.5px">344.70%</span></div>
<div class="td" style="left:321.2px;top:376.3px;width:99.3px"><span class="abs " style="left:8.5px;top:1.5px">74.55</span></div>
<div class="td" style="left:420.5px;top:376.3px;width:102.1px"><span class="abs " style="left:0;top:1.5px;width:100%;text-align:center">17.8449</span></div>
<div class="td" style="left:522.6px;top:376.3px;width:122.8px"><span class="abs " style="left:8.5px;top:1.5px">36863</span></div>
<div class="td" style="left:645.4px;top:376.3px;width:123.3px"><span class="abs " style="left:8.5px;top:1.5px">604</span></div>
<div class="td" style="left:768.7px;top:376.3px;width:123.4px"><span class="abs " style="left:8.5px;top:1.5px">1017</span></div>
<div class="td" style="left:892.1px;top:376.3px;width:122.3px"><span class="abs " style="left:8.5px;top:1.5px">1079</span></div>
<div class="td" style="left:1014.4px;top:376.3px;width:111.8px"><span class="abs " style="left:8.5px;top:1.5px">136</span></div>
<div class="td" style="left:1126.2px;top:376.3px;width:112.3px"><span class="abs " style="left:0;top:1.5px;width:100%;text-align:center">1885</span></div>
<div class="td" style="left:1238.5px;top:376.3px;width:101.3px"><span class="abs " style="left:8.5px;top:1.5px">0.12</span></div>
<div class="td" style="left:1339.8px;top:376.3px;width:99.8px"><span class="abs " style="left:8.5px;top:1.5px">1.63%</span></div>
<div class="td" style="left:1439.6px;top:376.3px;width:101.3px"><span class="abs " style="left:0;top:1.5px;width:100%;text-align:center">2076</span></div>
<div class="td" style="left:1540.9px;top:376.3px;width:101.8px"><span class="abs " style="left:0;top:1.5px;width:100%;text-align:center">2082</span></div>
<div class="td" style="left:1642.7px;top:376.3px;width:132.8px"><span class="abs " style="left:0;top:1.5px;width:100%;text-align:center">0.0085</span></div>
<div class="td" style="left:1775.5px;top:376.3px;width:135.4px"><span class="abs lnk" style="left:0;top:1.5px;width:100%;text-align:center">趋势</span></div>
<div class="td" style="left:-63.0px;top:423.4px;width:159.9px"><span class="abs" style="right:8.9px;top:1.5px;letter-spacing:.3px">www.shieldpro.com</span></div>
<div class="td" style="left:96.9px;top:423.4px;width:111.8px"><span class="abs red" style="left:8.5px;top:1.5px">212.31%</span></div>
<div class="td" style="left:208.7px;top:423.4px;width:112.5px"><span class="abs red" style="left:8.5px;top:1.5px">480.40%</span></div>
<div class="td" style="left:321.2px;top:423.4px;width:99.3px"><span class="abs " style="left:8.5px;top:1.5px">54.58</span></div>
<div class="td" style="left:420.5px;top:423.4px;width:102.1px"><span class="abs " style="left:0;top:1.5px;width:100%;text-align:center">115.8797</span></div>
<div class="td" style="left:522.6px;top:423.4px;width:122.8px"><span class="abs " style="left:8.5px;top:1.5px">7835</span></div>
<div class="td" style="left:645.4px;top:423.4px;width:123.3px"><span class="abs " style="left:8.5px;top:1.5px">245</span></div>
<div class="td" style="left:768.7px;top:423.4px;width:123.4px"><span class="abs " style="left:8.5px;top:1.5px">421</span></div>
<div class="td" style="left:892.1px;top:423.4px;width:122.3px"><span class="abs " style="left:8.5px;top:1.5px">1071</span></div>
<div class="td" style="left:1014.4px;top:423.4px;width:111.8px"><span class="abs " style="left:8.5px;top:1.5px">56</span></div>
<div class="td" style="left:1126.2px;top:423.4px;width:112.3px"><span class="abs " style="left:0;top:1.5px;width:100%;text-align:center">1213</span></div>
<div class="td" style="left:1238.5px;top:423.4px;width:101.3px"><span class="abs " style="left:8.5px;top:1.5px">0.22</span></div>
<div class="td" style="left:1339.8px;top:423.4px;width:99.8px"><span class="abs " style="left:8.5px;top:1.5px">3.12%</span></div>
<div class="td" style="left:1439.6px;top:423.4px;width:101.3px"><span class="abs " style="left:0;top:1.5px;width:100%;text-align:center">1155</span></div>
<div class="td" style="left:1540.9px;top:423.4px;width:101.8px"><span class="abs " style="left:0;top:1.5px;width:100%;text-align:center">1177</span></div>
<div class="td" style="left:1642.7px;top:423.4px;width:132.8px"><span class="abs " style="left:0;top:1.5px;width:100%;text-align:center">0.0984</span></div>
<div class="td" style="left:1775.5px;top:423.4px;width:135.4px"><span class="abs lnk" style="left:0;top:1.5px;width:100%;text-align:center">趋势</span></div>
<div class="td" style="left:-63.0px;top:470.4px;width:159.9px"><span class="abs" style="right:32.0px;top:1.5px;letter-spacing:.3px">www.wigsinall.com</span></div>
<div class="td" style="left:96.9px;top:470.4px;width:111.8px"><span class="abs grn" style="left:8.5px;top:1.5px">0.00%</span></div>
<div class="td" style="left:208.7px;top:470.4px;width:112.5px"><span class="abs grn" style="left:8.5px;top:1.5px">0.00%</span></div>
<div class="td" style="left:321.2px;top:470.4px;width:99.3px"><span class="abs " style="left:8.5px;top:1.5px">0</span></div>
<div class="td" style="left:420.5px;top:470.4px;width:102.1px"><span class="abs " style="left:0;top:1.5px;width:100%;text-align:center">2.5147</span></div>
<div class="td" style="left:522.6px;top:470.4px;width:122.8px"><span class="abs " style="left:8.5px;top:1.5px">0</span></div>
<div class="td" style="left:645.4px;top:470.4px;width:123.3px"><span class="abs " style="left:8.5px;top:1.5px">0</span></div>
<div class="td" style="left:768.7px;top:470.4px;width:123.4px"><span class="abs " style="left:8.5px;top:1.5px">0</span></div>
<div class="td" style="left:892.1px;top:470.4px;width:122.3px"><span class="abs " style="left:8.5px;top:1.5px">97</span></div>
<div class="td" style="left:1014.4px;top:470.4px;width:111.8px"><span class="abs " style="left:8.5px;top:1.5px">18</span></div>
<div class="td" style="left:1126.2px;top:470.4px;width:112.3px"><span class="abs " style="left:0;top:1.5px;width:100%;text-align:center">798</span></div>
<div class="td" style="left:1238.5px;top:470.4px;width:101.3px"><span class="abs " style="left:8.5px;top:1.5px">-</span></div>
<div class="td" style="left:1339.8px;top:470.4px;width:99.8px"><span class="abs " style="left:8.5px;top:1.5px">-</span></div>
<div class="td" style="left:1439.6px;top:470.4px;width:101.3px"><span class="abs " style="left:0;top:1.5px;width:100%;text-align:center">342</span></div>
<div class="td" style="left:1540.9px;top:470.4px;width:101.8px"><span class="abs " style="left:0;top:1.5px;width:100%;text-align:center">359</span></div>
<div class="td" style="left:1642.7px;top:470.4px;width:132.8px"><span class="abs " style="left:0;top:1.5px;width:100%;text-align:center">0.007</span></div>
<div class="td" style="left:1775.5px;top:470.4px;width:135.4px"><span class="abs lnk" style="left:0;top:1.5px;width:100%;text-align:center">趋势</span></div>
<div class="abs" style="left:0;top:0;width:30px;height:517px;box-shadow:inset 10px 0 8px -8px rgba(0,0,0,.11)"></div>
<div class="abs" style="left:1745.5px;top:0;width:30px;height:517px;box-shadow:inset -10px 0 8px -8px rgba(0,0,0,.03)"></div>
</div>
<div class="abs" style="left:5.7px;top:568.0px;width:1910.9px;height:8.5px;background:#f1f1f1"></div>
<div class="abs" style="left:65.5px;top:568.0px;width:1851.1px;height:8.5px;background:#c2c2c5"></div>
<span class="pg" style="left:1534.0px;top:592.5px">共 11 条数据</span>
<div class="abs" style="left:1623.4px;top:592.5px;width:24px;height:24px;border-radius:2px;background:#4592f7;color:#fff;text-align:center;line-height:24px;font-size:14.5px;font-weight:700">1</div>
<span class="pg" style="left:1654.2px;top:592.5px;width:24px;text-align:center">2</span>
<svg class="abs" style="left:1693.5px;top:597.5px;width:14px;height:14px;color:#333" viewBox="0 0 12 12" fill="none" stroke="currentColor" stroke-width="1.7" stroke-linecap="round" stroke-linejoin="round"><path d="M3.6 1.6L8.6 6 3.6 10.4"/></svg>
<div class="abs" style="left:1717.3px;top:592.5px;width:87.8px;height:24.5px;border:1px solid #e8e8ea;border-radius:3px"><span class="abs" style="left:8px;top:0;line-height:22px;font-size:13.8px;color:#555;white-space:nowrap">10 条/页</span><svg class="abs" style="right:6px;top:6.5px;width:11px;height:11px;color:#c0c0c0" viewBox="0 0 12 12" fill="none" stroke="currentColor" stroke-width="1.3"><path d="M1.5 3.5L6 8.5l4.5-5"/></svg></div>
<span class="pg" style="left:1814.5px;top:592.5px">跳至</span>
<div class="abs" style="left:1849.8px;top:592.5px;width:44.5px;height:24.5px;border:1px solid #e8e8ea;border-radius:3px"></div>
<span class="pg" style="left:1903.1px;top:592.5px">页</span>
</div>
<div class="abs" style="left:2107.5px;top:515.2px;width:47.5px;height:47.5px;border-radius:50%;background:#4592f7;z-index:9;box-shadow:0 2px 8px rgba(0,0,0,.12)">
<svg class="abs" style="left:15px;top:6px;width:18px;height:18px" viewBox="0 0 18 18" fill="none" stroke="#fff" stroke-width="1.7" stroke-linecap="round"><path d="M8.6 8.2L15.4 15" stroke-width="2.3"/><path d="M4.4 4.2l1.8 1.8M10.2 2.8v2.2M3.2 10h2.2M13.4 5.4l-1.6 1.4M6.4 12.2l-1.2 1.4" stroke-width="1.5"/></svg>
<span class="abs" style="left:0;top:25px;width:47.5px;text-align:center;line-height:14px;font-size:10px;color:#fff;font-weight:700;white-space:nowrap">AI助手</span></div>
</div></body></html>
